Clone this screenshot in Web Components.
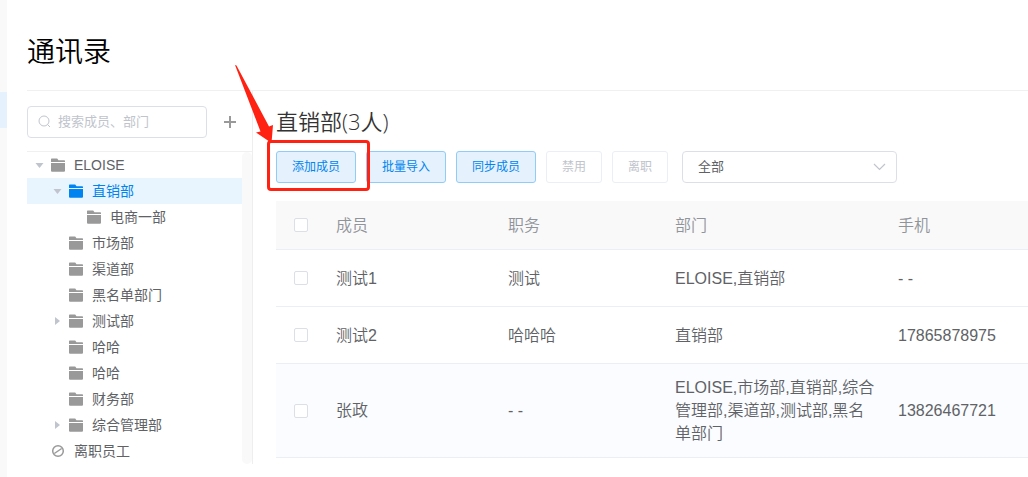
<!DOCTYPE html>
<html lang="zh-CN">
<head>
<meta charset="utf-8">
<title>通讯录</title>
<style>
  body {
    margin: 0;
    background: #fff;
    color: #606266;
    font-family: "Liberation Sans", "Noto Sans CJK SC", sans-serif;
    font-size: 14px;
    --primary: #0084ef;
    --line: #ebeef5;
    --muted: #c0c4cc;
    --soft: #f9f9f9;
  }
</style>
</head>
<body>
<contacts-page>
  <nav-rail slot="rail"></nav-rail>
  <page-heading slot="heading">通讯录</page-heading>
  <department-panel slot="side">
    <tree-item level="0" toggle="open">ELOISE</tree-item>
    <tree-item level="1" toggle="open" selected>直销部</tree-item>
    <tree-item level="2">电商一部</tree-item>
    <tree-item level="1">市场部</tree-item>
    <tree-item level="1">渠道部</tree-item>
    <tree-item level="1">黑名单部门</tree-item>
    <tree-item level="1" toggle="closed">测试部</tree-item>
    <tree-item level="1">哈哈</tree-item>
    <tree-item level="1">哈哈</tree-item>
    <tree-item level="1">财务部</tree-item>
    <tree-item level="1" toggle="closed">综合管理部</tree-item>
    <tree-item level="0" icon="ban">离职员工</tree-item>
  </department-panel>
  <member-panel>
    <span slot="title">直销部(3人)</span>
    <callout-mark slot="actions"><action-button kind="primary">添加成员</action-button></callout-mark>
    <action-button slot="actions" kind="primary">批量导入</action-button>
    <action-button slot="actions" kind="primary">同步成员</action-button>
    <action-button slot="actions" disabled>禁用</action-button>
    <action-button slot="actions" disabled>离职</action-button>
    <status-select slot="actions"></status-select>
    <member-table></member-table>
  </member-panel>
</contacts-page>

<script>
function define(name, markup, setup) {
  const template = document.createElement('template');
  template.innerHTML = markup;
  customElements.define(name, class extends HTMLElement {
    constructor() {
      super();
      this.attachShadow({ mode: 'open' }).append(template.content.cloneNode(true));
      if (setup) setup(this, this.shadowRoot);
    }
  });
}

define('contacts-page', `
  <style>
    :host { display: flex; min-height: 100vh; }
    .content { flex: 1; min-width: 0; padding-left: 20px; }
    .columns { display: flex; align-items: flex-start; }
    main { flex: 1; min-width: 0; }
  </style>
  <slot name="rail"></slot>
  <div class="content">
    <slot name="heading"></slot>
    <div class="columns">
      <slot name="side"></slot>
      <main><slot></slot></main>
    </div>
  </div>`);

define('nav-rail', `
  <style>
    :host { display: block; width: 7px; padding-top: 92px; box-sizing: border-box; background: var(--soft); }
    div { height: 36px; background: #e5f2fd; }
  </style>
  <div></div>`);

define('page-heading', `
  <style>
    :host { display: block; border-bottom: 1px solid #f0f0f0; padding: 33px 0 17px; }
    h1 { margin: 0; font-size: 28px; line-height: 40px; font-weight: 350; color: #000; }
  </style>
  <h1><slot></slot></h1>`);

define('department-panel', `
  <style>
    :host { display: block; flex: none; width: 225px; border-right: 1px solid #eee; }
    .tools { display: flex; align-items: center; padding: 15px 0 13px; border-bottom: 1px solid #f0f0f0; }
    .search { position: relative; width: 180px; }
    .search svg { position: absolute; left: 11px; top: 9px; }
    input { display: block; box-sizing: border-box; width: 100%; height: 32px; padding: 0 8px 2px 30px;
      border: 1px solid #dcdfe6; border-radius: 4px; font: inherit; font-size: 13px; outline: 0; }
    input::placeholder { color: var(--muted); }
    button { display: flex; margin-left: 17px; padding: 0; border: 0; background: none; }
    .body { display: flex; }
    nav { flex: 1; }
    .track { width: 10px; border-radius: 5px; background: var(--soft); }
  </style>
  <div class="tools">
    <div class="search">
      <input type="text" placeholder="搜索成员、部门" aria-label="搜索成员、部门">
      <svg width="14" height="14" fill="none" stroke="#c0c4cc" stroke-width="1"><circle cx="6" cy="6" r="5"/><path d="M9.5 9.5 12 12"/></svg>
    </div>
    <button type="button" aria-label="新增部门"><svg width="12" height="12" fill="none" stroke="#999" stroke-width="2"><path d="M6 0v12M0 6h12"/></svg></button>
  </div>
  <div class="body"><nav><slot></slot></nav><div class="track"></div></div>`);

define('tree-item', `
  <style>
    :host { display: block; }
    :host([selected]) { background: #e8f4fe; color: var(--primary); }
    a { display: flex; align-items: center; height: 26px; line-height: 26px; color: inherit; text-decoration: none; }
    :host([level="1"]) a { padding-left: 18px; }
    :host([level="2"]) a { padding-left: 36px; }
    .toggle { width: 24px; height: 14px; fill: var(--muted); }
    .toggle path, .icon { display: none; }
    :host([toggle="open"]) .open, :host([toggle="closed"]) .closed { display: inline; }
    .icon { width: 14px; height: 14px; margin-right: 9px; color: #999; }
    :host([selected]) .icon { color: var(--primary); }
    :host(:not([icon])) .folder, :host([icon="ban"]) .ban { display: block; }
  </style>
  <a href="#">
    <svg class="toggle" viewBox="0 0 24 14"><path class="open" d="M8.500 5h8l-4 5z"/><path class="closed" d="M10 3l5 4-5 4z"/></svg>
    <svg class="icon folder" viewBox="0 0 14 14"><path fill="currentColor" d="M0 1.200Q0 .5.700.500H6.200L7.500 2.300H13.300Q14 2.300 14 3V4H0zM0 5H14V12.700Q14 13.700 13 13.700H1Q0 13.700 0 12.700z"/></svg>
    <svg class="icon ban" viewBox="0 0 14 14" fill="none" stroke="#999" stroke-width="1.500"><circle cx="7" cy="7" r="5.300"/><path d="M3.300 9.500l7.400-5"/></svg>
    <slot></slot>
  </a>`);

define('member-panel', `
  <style>
    :host { display: block; padding: 14px 0 0 23px; }
    h2 { margin: 0; font-family: "Open Sans", "Noto Sans CJK SC", sans-serif; font-size: 22px; line-height: 32px; font-weight: 350; color: #333; }
    .actions { display: flex; gap: 10px; padding: 14px 0 18px; }
  </style>
  <h2><slot name="title"></slot></h2>
  <div class="actions"><slot name="actions"></slot></div>
  <slot></slot>`);

define('action-button', `
  <style>
    :host { display: block; }
    button { display: block; box-sizing: border-box; height: 32px; padding: 0 15px; border: 1px solid var(--line);
      border-radius: 3px; background: #fff; color: var(--muted); font: inherit; font-size: 12px; line-height: 30px; white-space: nowrap; }
    :host([kind="primary"]) button { border-color: #91cbf8; background: #e5f2fd; color: var(--primary); }
  </style>
  <button type="button"><slot></slot></button>`,
  (host, root) => { root.querySelector('button').disabled = host.hasAttribute('disabled'); });

define('callout-mark', `
  <style>
    :host { display: block; position: relative; z-index: 1; }
    .frame { position: absolute; inset: -11px -14px -8px -9px; border: 3px solid #ff2213; border-radius: 4px; pointer-events: none; }
    svg { position: absolute; left: -41px; top: -86px; pointer-events: none; }
  </style>
  <slot></slot>
  <div class="frame"></div>
  <svg width="40" height="80" fill="#ff2213"><path d="M0 0 1.500.500 34 61.500 38 60 36.500 78 21 67.500 25.500 66.500z"/></svg>`);

define('status-select', `
  <style>
    :host { display: block; position: relative; width: 215px; margin-left: 4px; }
    select { appearance: none; box-sizing: border-box; width: 100%; height: 32px; padding: 0 30px 2px 15px;
      border: 1px solid #dcdfe6; border-radius: 4px; background: #fff; color: #606266; font: inherit; font-size: 13px; }
    svg { position: absolute; right: 11px; top: 12px; pointer-events: none; }
  </style>
  <select aria-label="成员状态"><option>全部</option></select>
  <svg width="13" height="9" fill="none" stroke="#c0c4cc" stroke-width="1.200"><path d="M1 1l5.500 5.500L12 1"/></svg>`);

const members = [
  ['测试1', '测试', 'ELOISE,直销部', '- -'],
  ['测试2', '哈哈哈', '直销部', '17865878975'],
  ['张政', '- -', 'ELOISE,市场部,直销部,综合管理部,渠道部,测试部,黑名单部门', '13826467721'],
];

define('member-table', `
  <style>
    :host { display: block; }
    table { width: 100%; table-layout: fixed; border-spacing: 0; font-size: 16px; line-height: 23px; font-weight: 350; }
    th, td { box-sizing: border-box; height: 57px; padding: 12px 10px; border-bottom: 1px solid var(--line); text-align: left; font-weight: inherit; }
    th { height: 49px; background: var(--soft); color: #909399; }
    tbody tr:last-child { background: #fafcff; }
    .pick { width: 50px; padding-left: 18px; }
    .name { width: 172px; }
    .job { width: 167px; }
    .dept { width: 223px; }
    input { appearance: none; display: block; box-sizing: border-box; width: 14px; height: 14px; margin: 0;
      border: 1px solid #dcdfe6; border-radius: 2px; background: #fff; }
  </style>
  <table>
    <thead><tr>
      <th class="pick"><input type="checkbox" aria-label="全选"></th>
      <th class="name">成员</th><th class="job">职务</th><th class="dept">部门</th><th>手机</th>
    </tr></thead>
    <tbody></tbody>
  </table>`,
  (host, root) => {
    const body = root.querySelector('tbody');
    for (const member of members) {
      const row = body.insertRow();
      const pick = row.insertCell();
      pick.className = 'pick';
      const box = document.createElement('input');
      box.type = 'checkbox';
      box.setAttribute('aria-label', member[0]);
      pick.append(box);
      for (const value of member) row.insertCell().textContent = value;
    }
  });
</script>
</body>
</html>
